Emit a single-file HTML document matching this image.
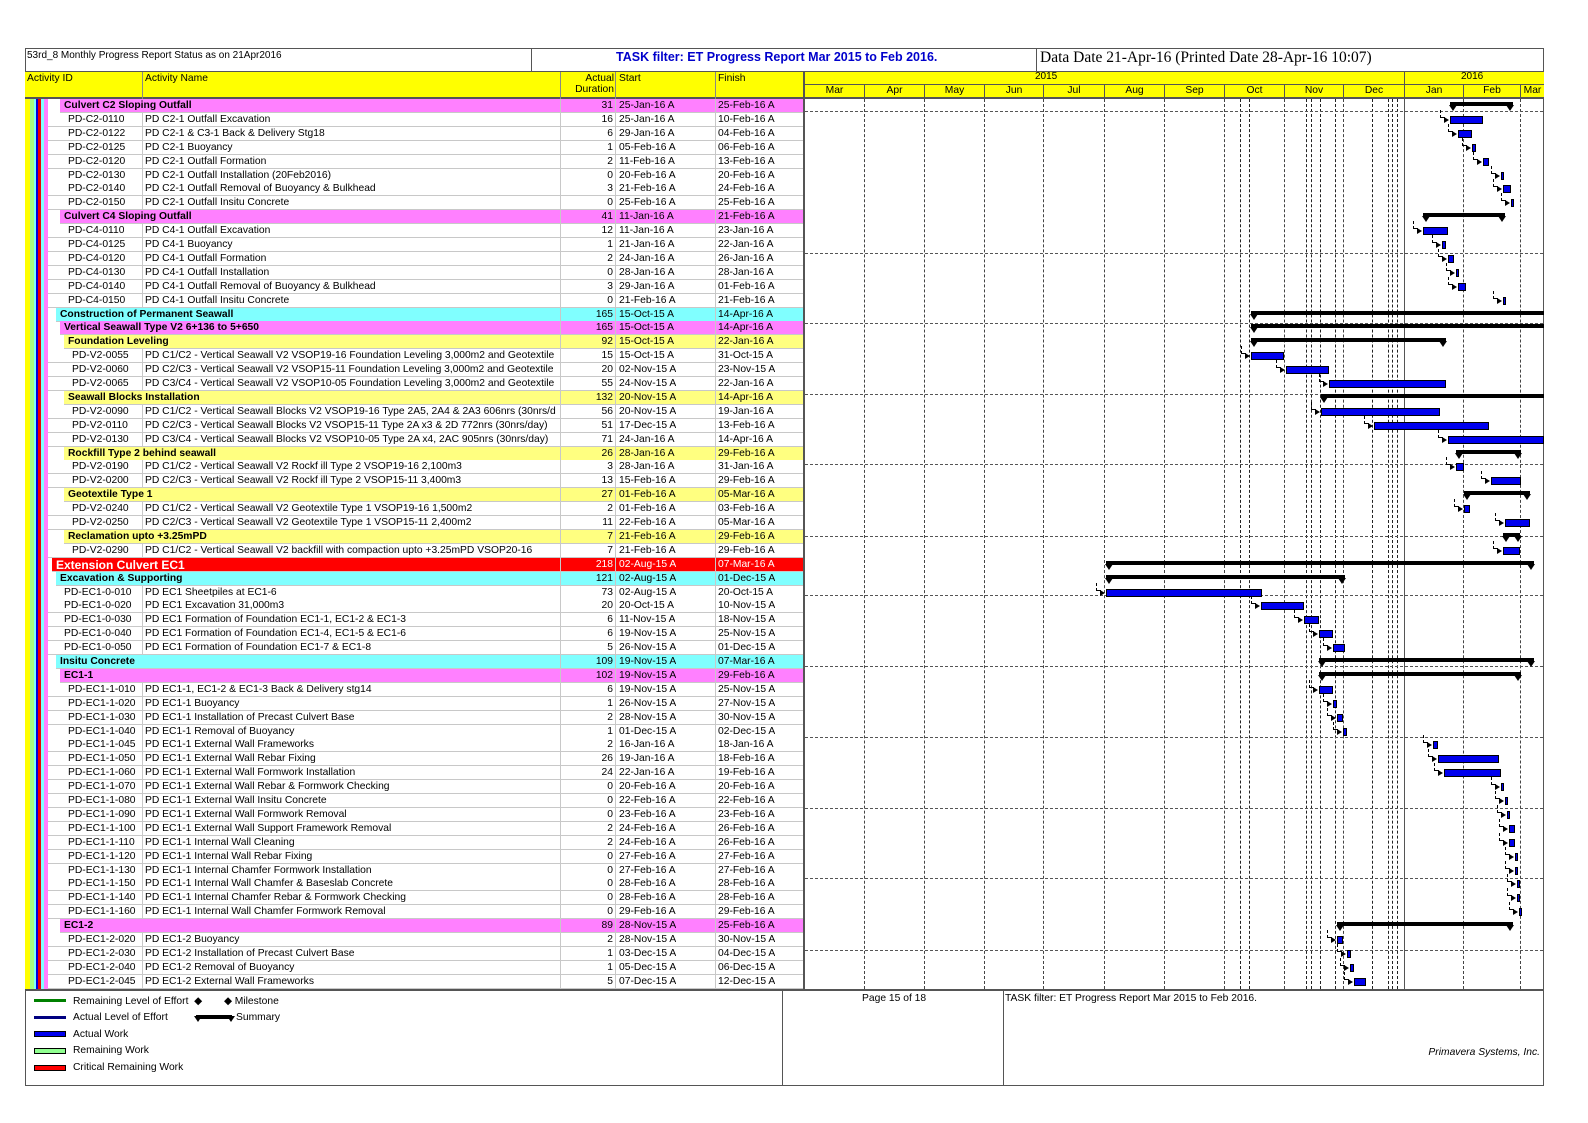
<!DOCTYPE html>
<html><head><meta charset="utf-8">
<style>
*{margin:0;padding:0;box-sizing:border-box}
body{width:1588px;height:1123px;background:#fff;position:relative;overflow:hidden;font-family:"Liberation Sans",Arial,sans-serif;font-size:10.3px;color:#000}
.a{position:absolute}
.row{position:absolute;left:48px;width:755px;height:14px;border-bottom:1px solid #c8c8c8;white-space:nowrap;overflow:hidden}
.t{position:absolute;top:1px;line-height:12px;overflow:hidden;white-space:nowrap}
.b{font-weight:bold}
.vl{position:absolute;width:0;border-left:1px dashed #444}
.hl{position:absolute;height:0;border-top:1px dashed #555;left:805px;width:738px}
.bar{position:absolute;background:#0000ee;border:1px solid #000;height:8px}
.sum{position:absolute;background:#000;height:4px}
.tri{position:absolute;width:0;height:0;border-left:4px solid transparent;border-right:4px solid transparent;border-top:6px solid #000}
.arr{position:absolute;width:0;height:0;border-top:3px solid transparent;border-bottom:3px solid transparent;border-left:5px solid #000}
</style></head><body>
<div class="a" style="left:25px;top:48px;width:1519px;height:1038px;border:1px solid #555"></div>
<div class="a" style="left:25px;top:48px;width:1519px;height:24px;border-bottom:1px solid #555"></div>
<div class="a" style="left:531px;top:48px;height:24px;border-left:1px solid #555"></div>
<div class="a" style="left:1036px;top:48px;height:24px;border-left:1px solid #555"></div>
<div class="a" style="left:27px;top:50px;font-size:10px">53rd_8 Monthly Progress Report Status as on 21Apr2016</div>
<div class="a b" style="left:616px;top:50px;font-size:12.5px;color:#0000cc">TASK filter: ET Progress Report Mar 2015 to Feb 2016.</div>
<div class="a" style="left:1040px;top:49px;font-size:15.5px;font-family:'Liberation Serif',serif">Data Date 21-Apr-16 (Printed Date 28-Apr-16 10:07)</div>
<div class="a" style="left:25px;top:72px;width:1519px;height:27px;background:#ffff00;border-bottom:2px solid #555"></div>
<div class="a" style="left:27px;top:73px">Activity ID</div>
<div class="a" style="left:145px;top:73px">Activity Name</div>
<div class="a" style="left:560px;top:73px;width:54px;text-align:right;line-height:11px">Actual<br>Duration</div>
<div class="a" style="left:619px;top:73px">Start</div>
<div class="a" style="left:718px;top:73px">Finish</div>
<div class="a" style="left:142px;top:72px;height:27px;border-left:1px solid #888"></div>
<div class="a" style="left:560px;top:72px;height:27px;border-left:1px solid #888"></div>
<div class="a" style="left:615px;top:72px;height:27px;border-left:1px solid #888"></div>
<div class="a" style="left:715px;top:72px;height:27px;border-left:1px solid #888"></div>
<div class="a" style="left:803px;top:72px;height:918px;border-left:2px solid #555"></div>
<div class="a" style="left:805px;top:84px;width:739px;border-top:1px solid #555"></div>
<div class="a" style="left:1035px;top:71px;font-size:10px">2015</div>
<div class="a" style="left:1461px;top:71px;font-size:10px">2016</div>
<div id="months"></div>
<div id="grid"></div>
<div id="rows"></div>
<div class="a" style="left:25px;top:99px;width:5px;height:890px;background:#ffff00"></div>
<div class="a" style="left:30px;top:99px;width:4px;height:890px;background:#a8ff80"></div>
<div class="a" style="left:34px;top:99px;width:2px;height:890px;background:#80ffff"></div>
<div class="a" style="left:36px;top:99px;width:2px;height:890px;background:#0000dd"></div>
<div class="a" style="left:38px;top:99px;width:3px;height:890px;background:#ee0000"></div>
<div class="a" style="left:41px;top:99px;width:3px;height:890px;background:#80ffff"></div>
<div class="a" style="left:44px;top:99px;width:4px;height:890px;background:#ff80ff"></div>
<div class="a" style="left:25px;top:989px;width:1519px;border-top:2px solid #555"></div>
<div class="a" style="left:782px;top:990px;height:96px;border-left:1px solid #555"></div>
<div class="a" style="left:1003px;top:990px;height:96px;border-left:1px solid #555"></div>
<div class="a" style="left:34px;top:999px;width:32px;height:3px;background:#008000"></div>
<div class="a" style="left:73px;top:995px">Remaining Level of Effort &nbsp;&#9670;</div>
<div class="a" style="left:224px;top:995px">&#9670; Milestone</div>
<div class="a" style="left:34px;top:1016px;width:32px;height:3px;background:#000080"></div>
<div class="a" style="left:73px;top:1012px">Actual Level of Effort</div>
<div class="a" style="left:196px;top:1015px;width:36px;height:4px;background:#000"></div>
<div class="tri" style="left:194px;top:1016px"></div><div class="tri" style="left:227px;top:1016px"></div>
<div class="a" style="left:236px;top:1012px">Summary</div>
<div class="a" style="left:34px;top:1031px;width:32px;height:6px;background:#0000ee;border:1px solid #000"></div>
<div class="a" style="left:73px;top:1029px">Actual Work</div>
<div class="a" style="left:34px;top:1048px;width:32px;height:6px;background:#90ff90;border:1px solid #000"></div>
<div class="a" style="left:73px;top:1045px">Remaining Work</div>
<div class="a" style="left:34px;top:1065px;width:32px;height:6px;background:#ff0000;border:1px solid #000"></div>
<div class="a" style="left:73px;top:1062px">Critical Remaining Work</div>
<div class="a" style="left:862px;top:993px">Page 15 of 18</div>
<div class="a" style="left:1005px;top:993px">TASK filter: ET Progress Report Mar 2015 to Feb 2016.</div>
<div class="a" style="left:1380px;top:1047px;width:160px;text-align:right;font-style:italic">Primavera Systems, Inc.</div>
<script>
var M=["Jan","Feb","Mar","Apr","May","Jun","Jul","Aug","Sep","Oct","Nov","Dec"];
var months=[["Mar",805],["Apr",864],["May",924],["Jun",984],["Jul",1043],["Aug",1104],["Sep",1164],["Oct",1224],["Nov",1284],["Dec",1343],["Jan",1404],["Feb",1463],["Mar",1520],["",1544]];
var h="",g="";
for(var i=0;i<13;i++){var x=months[i][1],w=months[i+1][1]-x;
h+='<div class="a" style="left:'+x+'px;top:84px;width:'+w+'px;height:14px;text-align:center;line-height:13px;border-left:'+(i?1:0)+'px solid #555">'+months[i][0]+'</div>';
if(i)g+='<div class="vl" style="left:'+x+'px;top:99px;height:890px;'+(i==10?'border-left:1px solid #555;top:72px;height:917px':'')+'"></div>';}
h+='<div class="a" style="left:1404px;top:72px;height:12px;border-left:1px solid #555"></div>';
document.getElementById("months").innerHTML=h;
[1240,1249,1306,1311,1320,1335,1372,1388,1392,1397].forEach(function(x){g+='<div class="vl" style="left:'+x+'px;top:99px;height:890px;border-left-color:#222"></div>'});
[111,253,323,394,464,536,595,666,737,808,878,950].forEach(function(y){g+='<div class="hl" style="top:'+y+'px"></div>'});
document.getElementById("grid").innerHTML=g;
function dx(s){var p=s.split("-");var y=2000+parseInt(p[2]);var d=new Date(Date.UTC(y,M.indexOf(p[1]),parseInt(p[0])));return 805+(d-Date.UTC(2015,2,1))/864e5*1.955;}
var R=[
["p",64,"","Culvert C2 Sloping Outfall",31,"25-Jan-16","25-Feb-16"],
["n",68,"PD-C2-0110","PD C2-1 Outfall Excavation",16,"25-Jan-16","10-Feb-16"],
["n",68,"PD-C2-0122","PD C2-1 & C3-1 Back & Delivery Stg18",6,"29-Jan-16","04-Feb-16"],
["n",68,"PD-C2-0125","PD C2-1 Buoyancy",1,"05-Feb-16","06-Feb-16"],
["n",68,"PD-C2-0120","PD C2-1 Outfall Formation",2,"11-Feb-16","13-Feb-16"],
["n",68,"PD-C2-0130","PD C2-1 Outfall Installation (20Feb2016)",0,"20-Feb-16","20-Feb-16"],
["n",68,"PD-C2-0140","PD C2-1 Outfall Removal of Buoyancy & Bulkhead",3,"21-Feb-16","24-Feb-16"],
["n",68,"PD-C2-0150","PD C2-1 Outfall Insitu Concrete",0,"25-Feb-16","25-Feb-16"],
["p",64,"","Culvert C4 Sloping Outfall",41,"11-Jan-16","21-Feb-16"],
["n",68,"PD-C4-0110","PD C4-1 Outfall Excavation",12,"11-Jan-16","23-Jan-16"],
["n",68,"PD-C4-0125","PD C4-1 Buoyancy",1,"21-Jan-16","22-Jan-16"],
["n",68,"PD-C4-0120","PD C4-1 Outfall Formation",2,"24-Jan-16","26-Jan-16"],
["n",68,"PD-C4-0130","PD C4-1 Outfall Installation",0,"28-Jan-16","28-Jan-16"],
["n",68,"PD-C4-0140","PD C4-1 Outfall Removal of Buoyancy & Bulkhead",3,"29-Jan-16","01-Feb-16"],
["n",68,"PD-C4-0150","PD C4-1 Outfall Insitu Concrete",0,"21-Feb-16","21-Feb-16"],
["c",60,"","Construction of Permanent Seawall",165,"15-Oct-15","14-Apr-16"],
["p",64,"","Vertical Seawall Type V2 6+136 to 5+650",165,"15-Oct-15","14-Apr-16"],
["y",68,"","Foundation Leveling",92,"15-Oct-15","22-Jan-16"],
["n",72,"PD-V2-0055","PD C1/C2 - Vertical Seawall V2 VSOP19-16 Foundation Leveling 3,000m2 and Geotextile",15,"15-Oct-15","31-Oct-15"],
["n",72,"PD-V2-0060","PD C2/C3 - Vertical Seawall V2 VSOP15-11 Foundation Leveling 3,000m2 and Geotextile",20,"02-Nov-15","23-Nov-15"],
["n",72,"PD-V2-0065","PD C3/C4 - Vertical Seawall V2 VSOP10-05 Foundation Leveling 3,000m2 and Geotextile",55,"24-Nov-15","22-Jan-16"],
["y",68,"","Seawall Blocks Installation",132,"20-Nov-15","14-Apr-16"],
["n",72,"PD-V2-0090","PD C1/C2 - Vertical Seawall Blocks V2 VSOP19-16 Type 2A5, 2A4 & 2A3 606nrs (30nrs/d",56,"20-Nov-15","19-Jan-16"],
["n",72,"PD-V2-0110","PD C2/C3 - Vertical Seawall Blocks V2 VSOP15-11 Type 2A x3 & 2D 772nrs (30nrs/day)",51,"17-Dec-15","13-Feb-16"],
["n",72,"PD-V2-0130","PD C3/C4 - Vertical Seawall Blocks V2 VSOP10-05 Type 2A x4, 2AC 905nrs (30nrs/day)",71,"24-Jan-16","14-Apr-16"],
["y",68,"","Rockfill Type 2 behind seawall",26,"28-Jan-16","29-Feb-16"],
["n",72,"PD-V2-0190","PD C1/C2 - Vertical Seawall V2 Rockf ill Type 2 VSOP19-16 2,100m3",3,"28-Jan-16","31-Jan-16"],
["n",72,"PD-V2-0200","PD C2/C3 - Vertical Seawall V2 Rockf ill Type 2 VSOP15-11 3,400m3",13,"15-Feb-16","29-Feb-16"],
["y",68,"","Geotextile Type 1",27,"01-Feb-16","05-Mar-16"],
["n",72,"PD-V2-0240","PD C1/C2 - Vertical Seawall V2 Geotextile Type 1 VSOP19-16 1,500m2",2,"01-Feb-16","03-Feb-16"],
["n",72,"PD-V2-0250","PD C2/C3 - Vertical Seawall V2 Geotextile Type 1 VSOP15-11 2,400m2",11,"22-Feb-16","05-Mar-16"],
["y",68,"","Reclamation upto +3.25mPD",7,"21-Feb-16","29-Feb-16"],
["n",72,"PD-V2-0290","PD C1/C2 - Vertical Seawall V2 backfill with compaction upto +3.25mPD VSOP20-16",7,"21-Feb-16","29-Feb-16"],
["r",56,"","Extension Culvert EC1",218,"02-Aug-15","07-Mar-16"],
["c",60,"","Excavation & Supporting",121,"02-Aug-15","01-Dec-15"],
["n",64,"PD-EC1-0-010","PD EC1 Sheetpiles at EC1-6",73,"02-Aug-15","20-Oct-15"],
["n",64,"PD-EC1-0-020","PD EC1 Excavation 31,000m3",20,"20-Oct-15","10-Nov-15"],
["n",64,"PD-EC1-0-030","PD EC1 Formation of Foundation EC1-1, EC1-2 & EC1-3",6,"11-Nov-15","18-Nov-15"],
["n",64,"PD-EC1-0-040","PD EC1 Formation of Foundation EC1-4, EC1-5 & EC1-6",6,"19-Nov-15","25-Nov-15"],
["n",64,"PD-EC1-0-050","PD EC1 Formation of Foundation EC1-7 & EC1-8",5,"26-Nov-15","01-Dec-15"],
["c",60,"","Insitu Concrete",109,"19-Nov-15","07-Mar-16"],
["p",64,"","EC1-1",102,"19-Nov-15","29-Feb-16"],
["n",68,"PD-EC1-1-010","PD EC1-1, EC1-2 & EC1-3 Back & Delivery stg14",6,"19-Nov-15","25-Nov-15"],
["n",68,"PD-EC1-1-020","PD EC1-1 Buoyancy",1,"26-Nov-15","27-Nov-15"],
["n",68,"PD-EC1-1-030","PD EC1-1 Installation of Precast Culvert Base",2,"28-Nov-15","30-Nov-15"],
["n",68,"PD-EC1-1-040","PD EC1-1 Removal of Buoyancy",1,"01-Dec-15","02-Dec-15"],
["n",68,"PD-EC1-1-045","PD EC1-1 External Wall Frameworks",2,"16-Jan-16","18-Jan-16"],
["n",68,"PD-EC1-1-050","PD EC1-1 External Wall Rebar Fixing",26,"19-Jan-16","18-Feb-16"],
["n",68,"PD-EC1-1-060","PD EC1-1 External Wall Formwork Installation",24,"22-Jan-16","19-Feb-16"],
["n",68,"PD-EC1-1-070","PD EC1-1 External Wall Rebar & Formwork Checking",0,"20-Feb-16","20-Feb-16"],
["n",68,"PD-EC1-1-080","PD EC1-1 External Wall Insitu Concrete",0,"22-Feb-16","22-Feb-16"],
["n",68,"PD-EC1-1-090","PD EC1-1 External Wall Formwork Removal",0,"23-Feb-16","23-Feb-16"],
["n",68,"PD-EC1-1-100","PD EC1-1 External Wall Support Framework Removal",2,"24-Feb-16","26-Feb-16"],
["n",68,"PD-EC1-1-110","PD EC1-1 Internal Wall Cleaning",2,"24-Feb-16","26-Feb-16"],
["n",68,"PD-EC1-1-120","PD EC1-1 Internal Wall Rebar Fixing",0,"27-Feb-16","27-Feb-16"],
["n",68,"PD-EC1-1-130","PD EC1-1 Internal Chamfer Formwork Installation",0,"27-Feb-16","27-Feb-16"],
["n",68,"PD-EC1-1-150","PD EC1-1 Internal Wall Chamfer & Baseslab Concrete",0,"28-Feb-16","28-Feb-16"],
["n",68,"PD-EC1-1-140","PD EC1-1 Internal Chamfer Rebar & Formwork Checking",0,"28-Feb-16","28-Feb-16"],
["n",68,"PD-EC1-1-160","PD EC1-1 Internal Wall Chamfer Formwork Removal",0,"29-Feb-16","29-Feb-16"],
["p",64,"","EC1-2",89,"28-Nov-15","25-Feb-16"],
["n",68,"PD-EC1-2-020","PD EC1-2 Buoyancy",2,"28-Nov-15","30-Nov-15"],
["n",68,"PD-EC1-2-030","PD EC1-2 Installation of Precast Culvert Base",1,"03-Dec-15","04-Dec-15"],
["n",68,"PD-EC1-2-040","PD EC1-2 Removal of Buoyancy",1,"05-Dec-15","06-Dec-15"],
["n",68,"PD-EC1-2-045","PD EC1-2 External Wall Frameworks",5,"07-Dec-15","12-Dec-15"]
];
var col={p:"#ff80ff",c:"#80ffff",y:"#ffff80",r:"#ff0000",n:"#fff"};
var o="";
R.forEach(function(r,i){
 var top=99+i*13.9, ind=r[1], grp=r[0]!="n";
 var left=grp?ind-4:48;
 o+='<div class="row" style="top:'+top.toFixed(1)+'px;left:'+left+'px;width:'+(803-left)+'px;background:'+col[r[0]]+'">';
 var fs=r[0]=="r"?'font-size:12px;color:#fff;':'';
 var txc=r[0]=="r"?'color:#fff;':'';
 var ox=-left;
 if(grp){o+='<div class="t b" style="left:'+(ind+ox)+'px;'+fs+'">'+r[3]+'</div>';}
 else{o+='<div class="t" style="left:'+(ind+ox)+'px">'+r[2]+'</div><div class="a" style="left:'+(142+ox)+'px;top:0;height:14px;border-left:1px solid #c8c8c8"></div><div class="t" style="left:'+(145+ox)+'px;width:412px">'+r[3]+'</div>';}
 o+='<div class="a" style="left:'+(560+ox)+'px;top:0;height:14px;border-left:1px solid #c8c8c8"></div><div class="a" style="left:'+(615+ox)+'px;top:0;height:14px;border-left:1px solid #c8c8c8"></div><div class="a" style="left:'+(715+ox)+'px;top:0;height:14px;border-left:1px solid #c8c8c8"></div>';
 o+='<div class="t" style="left:'+(560+ox)+'px;width:53px;text-align:right;'+txc+'">'+r[4]+'</div>';
 o+='<div class="t" style="left:'+(619+ox)+'px;'+txc+'">'+r[5]+' A</div><div class="t" style="left:'+(718+ox)+'px;'+txc+'">'+r[6]+' A</div></div>';
 var x1=dx(r[5]),x2=Math.min(dx(r[6])+2,1544);
 if(grp){var yy=top+3;o+='<div class="sum" style="left:'+x1.toFixed(1)+'px;top:'+yy.toFixed(1)+'px;width:'+(x2-x1).toFixed(1)+'px"></div><div class="tri" style="left:'+(x1-1).toFixed(1)+'px;top:'+(yy+3).toFixed(1)+'px"></div>';
  if(x2<1543)o+='<div class="tri" style="left:'+(x2-7).toFixed(1)+'px;top:'+(yy+3).toFixed(1)+'px"></div>';}
 else{var w=Math.max(x2-x1,3),yy=top+3;o+='<div class="bar" style="left:'+x1.toFixed(1)+'px;top:'+yy.toFixed(1)+'px;width:'+w.toFixed(1)+'px"></div><div class="arr" style="left:'+(x1-6).toFixed(1)+'px;top:'+(yy+1).toFixed(1)+'px"></div>';
  o+='<div class="a" style="left:'+(x1-10).toFixed(1)+'px;top:'+(top-3).toFixed(1)+'px;width:5px;height:8px;border-left:1px dashed #000;border-bottom:1px dashed #000"></div>';}
});
document.getElementById("rows").innerHTML=o;
</script>
</body></html>
